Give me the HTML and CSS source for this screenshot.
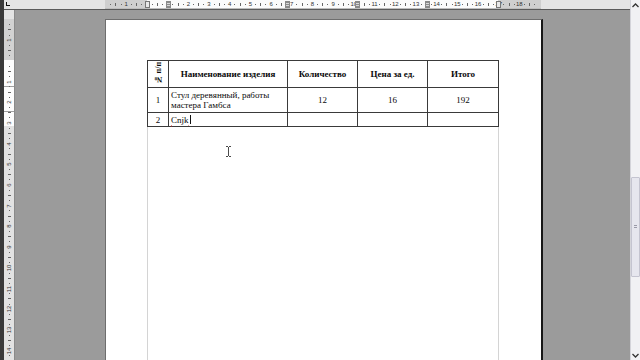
FILE: index.html
```html
<!DOCTYPE html>
<html lang="ru">
<head>
<meta charset="utf-8">
<title>Документ</title>
<link rel="stylesheet" href="styles.css">
</head>
<body>
<div class="app">
  <div class="edge"></div>
  <div class="main">
    <div class="topbar">
      <div class="tabsel"><span class="tabL"></span></div>
      <div class="hruler-wrap">
        <div class="hruler">
          <div class="hcell"><span></span><span class="dot"></span><span class="tick"></span><span class="dot"></span></div>
          <div class="hcell"><span>1</span><span class="dot"></span><span class="tick"></span><span class="dot"></span></div>
          <div class="hcell"><span></span><span class="dot"></span><span class="tick"></span><span class="dot"></span></div>
          <div class="hcell"><span></span><span class="dot"></span><span class="tick"></span><span class="dot"></span></div>
          <div class="hcell"><span>2</span><span class="dot"></span><span class="tick"></span><span class="dot"></span></div>
          <div class="hcell"><span>3</span><span class="dot"></span><span class="tick"></span><span class="dot"></span></div>
          <div class="hcell"><span>4</span><span class="dot"></span><span class="tick"></span><span class="dot"></span></div>
          <div class="hcell"><span>5</span><span class="dot"></span><span class="tick"></span><span class="dot"></span></div>
          <div class="hcell"><span>6</span><span class="dot"></span><span class="tick"></span><span class="dot"></span></div>
          <div class="hcell"><span>7</span><span class="dot"></span><span class="tick"></span><span class="dot"></span></div>
          <div class="hcell"><span>8</span><span class="dot"></span><span class="tick"></span><span class="dot"></span></div>
          <div class="hcell"><span>9</span><span class="dot"></span><span class="tick"></span><span class="dot"></span></div>
          <div class="hcell"><span>10</span><span class="dot"></span><span class="tick"></span><span class="dot"></span></div>
          <div class="hcell"><span>11</span><span class="dot"></span><span class="tick"></span><span class="dot"></span></div>
          <div class="hcell"><span>12</span><span class="dot"></span><span class="tick"></span><span class="dot"></span></div>
          <div class="hcell"><span>13</span><span class="dot"></span><span class="tick"></span><span class="dot"></span></div>
          <div class="hcell"><span>14</span><span class="dot"></span><span class="tick"></span><span class="dot"></span></div>
          <div class="hcell"><span>15</span><span class="dot"></span><span class="tick"></span><span class="dot"></span></div>
          <div class="hcell"><span>16</span><span class="dot"></span><span class="tick"></span><span class="dot"></span></div>
          <div class="hcell"><span>17</span><span class="dot"></span><span class="tick"></span><span class="dot"></span></div>
          <div class="hcell"><span>18</span><span class="dot"></span><span class="tick"></span><span class="dot"></span></div>
          <span class="mark indent-l"></span>
          <span class="mark col m1"></span>
          <span class="mark col m2"></span>
          <span class="mark col m3"></span>
          <span class="mark col m4"></span>
          <span class="mark indent-r"></span>
        </div>
      </div>
    </div>
    <div class="body">
      <div class="vruler">
        <div class="vcell"><span></span><span class="dot"></span><span class="tick"></span><span class="dot"></span></div>
        <div class="vcell"><span>1</span><span class="dot"></span><span class="tick"></span><span class="dot"></span></div>
        <div class="vcell"><span></span><span class="dot"></span><span class="tick"></span><span class="dot"></span></div>
        <div class="vcell"><span>1</span><span class="dot"></span><span class="tick"></span><span class="dot"></span></div>
        <div class="vcell"><span>2</span><span class="dot"></span><span class="tick"></span><span class="dot"></span></div>
        <div class="vcell"><span>3</span><span class="dot"></span><span class="tick"></span><span class="dot"></span></div>
        <div class="vcell"><span>4</span><span class="dot"></span><span class="tick"></span><span class="dot"></span></div>
        <div class="vcell"><span>5</span><span class="dot"></span><span class="tick"></span><span class="dot"></span></div>
        <div class="vcell"><span>6</span><span class="dot"></span><span class="tick"></span><span class="dot"></span></div>
        <div class="vcell"><span>7</span><span class="dot"></span><span class="tick"></span><span class="dot"></span></div>
        <div class="vcell"><span>8</span><span class="dot"></span><span class="tick"></span><span class="dot"></span></div>
        <div class="vcell"><span>9</span><span class="dot"></span><span class="tick"></span><span class="dot"></span></div>
        <div class="vcell"><span>10</span><span class="dot"></span><span class="tick"></span><span class="dot"></span></div>
        <div class="vcell"><span>11</span><span class="dot"></span><span class="tick"></span><span class="dot"></span></div>
        <div class="vcell"><span>12</span><span class="dot"></span><span class="tick"></span><span class="dot"></span></div>
        <div class="vcell"><span>13</span><span class="dot"></span><span class="tick"></span><span class="dot"></span></div>
        <div class="vcell"><span>14</span><span class="dot"></span><span class="tick"></span><span class="dot"></span></div>
      </div>
      <div class="workspace">
        <div class="page">
          <div class="textarea">
            <table class="grid">
              <colgroup><col class="c1"><col class="c2"><col class="c3"><col class="c4"><col class="c5"></colgroup>
              <tr class="r-head">
                <th class="num"><span class="vert">№ п/п</span></th>
                <th>Наименование изделия</th>
                <th>Количество</th>
                <th>Цена за ед.</th>
                <th>Итого</th>
              </tr>
              <tr class="r-1">
                <td class="ctr">1</td>
                <td class="name">Стул деревянный, работы мастера Гамбса</td>
                <td class="ctr">12</td>
                <td class="ctr">16</td>
                <td class="ctr">192</td>
              </tr>
              <tr class="r-2">
                <td class="ctr">2</td>
                <td class="name"><span class="typo">Cnjk</span><span class="caret"></span></td>
                <td></td>
                <td></td>
                <td></td>
              </tr>
            </table>
          </div>
          <svg class="ibeam" width="7" height="11" viewBox="0 0 7 11"><path d="M1 0.5h2M4 0.5h2M3.5 1v9M1 10.5h2M4 10.5h2" stroke="#4a4a4a" stroke-width="1" fill="none"/></svg>
        </div>
      </div>
    </div>
  </div>
  <div class="scrollbar">
    <div class="sb-btn"><svg width="7" height="5" viewBox="0 0 7 5"><path d="M0.5 4L3.5 1L6.5 4" stroke="#333" stroke-width="1.3" fill="none"/></svg></div>
    <div class="sb-track"><div class="sb-thumb"><span class="grip"></span></div></div>
    <div class="sb-btn"><svg width="7" height="5" viewBox="0 0 7 5"><path d="M0.5 1L3.5 4L6.5 1" stroke="#333" stroke-width="1.3" fill="none"/></svg></div>
  </div>
</div>
</body>
</html>
```

FILE: styles.css
```css
* { box-sizing: border-box; margin: 0; padding: 0; }
html, body { width: 640px; height: 360px; overflow: hidden; }
body { font-family: "Liberation Sans", Arial, sans-serif; background: #9b9b9b; }

.app { display: flex; width: 640px; height: 360px; }
.edge { width: 4px; flex: none; background: #3a3a3a; }
.main { width: 626px; flex: none; display: flex; flex-direction: column; }

/* top ruler */
.topbar { height: 10px; flex: none; display: flex; background: #e4e4e4; border-bottom: 1px solid #5a5a5a; }
.tabsel { width: 10px; flex: none; display: flex; padding: 2px 0 0 2px; }
.tabL { width: 4px; height: 4px; border-left: 1px solid #111; border-bottom: 1px solid #111; }
.hruler-wrap { flex: 1; padding-left: 91px; }
.hruler {
  position: relative; width: 436px; height: 9px; display: flex; padding-left: 0.6px;
  background: linear-gradient(to right, #cfcfcf 0 42px, #fbfbfb 42px 393px, #cfcfcf 393px);
  border-bottom: 1px solid #bdbdbd;
}
.hcell { width: 20.7px; height: 9px; flex: none; display: grid; grid-template-columns: repeat(4, 1fr); }
.hcell > span { width: 0; height: 9px; display: flex; justify-content: center; align-items: center;
  font-size: 6px; line-height: 9px; color: #333; white-space: nowrap; }
.hcell > .dot::before { content: ""; width: 1px; height: 1px; background: #666; flex: none; }
.hcell > .tick::before { content: ""; width: 1px; height: 3px; background: #666; flex: none; }

.mark { position: absolute; top: 1px; height: 7px; }
.mark.col { width: 5px; margin-left: -2px; background: repeating-linear-gradient(to bottom, #8c8c8c 0 1px, #d8d8d8 1px 2px); border: 1px solid #8a8a8a; }
.m1 { left: 63px; }
.m2 { left: 182px; }
.m3 { left: 252px; }
.m4 { left: 322px; }
.indent-l { left: 40px; width: 5px; border: 1px solid #777; background: #e8e8e8; }
.indent-r { left: 391px; width: 5px; border: 1px solid #777; background: #e8e8e8; }

/* body */
.body { flex: 1; min-height: 0; display: flex; }
.vruler {
  width: 11px; flex: none; display: flex; flex-direction: column; padding-top: 9.6px; overflow: hidden;
  border-right: 1px solid #8a8a8a;
  background: linear-gradient(to bottom, #e4e4e4 0 9px, #d2d2d2 9px 50px, #fdfdfd 50px 76px, #a0a0a0 76px 77px,
    #fdfdfd 77px 101px, #a0a0a0 101px 102px, #fdfdfd 102px 116px, #e2e2e2 116px);
}
.vcell { height: 20.7px; width: 10px; flex: none; display: grid; grid-template-rows: repeat(4, 1fr); }
.vcell > span { height: 0; width: 10px; display: flex; justify-content: center; align-items: center;
  font-size: 6px; color: #333; white-space: nowrap; }
.vcell > span:first-child { transform: rotate(-90deg); }
.vcell > .dot::before { content: ""; width: 1px; height: 1px; background: #666; flex: none; }
.vcell > .tick::before { content: ""; width: 3px; height: 1px; background: #666; flex: none; }

.workspace { flex: 1; overflow: hidden; padding: 9px 0 0 90px; background: #9b9b9b; }
.page {
  position: relative; width: 438px; height: 400px; background: #fff;
  border-left: 1px solid #6e6e6e; border-top: 1px solid #6e6e6e; border-right: 2px solid #161616;
  padding: 40px 0 0 41px;
}
.textarea {
  width: 352px; height: 320px;
  background:
    linear-gradient(#d4d4d4, #d4d4d4) left top / 1px 100% no-repeat,
    linear-gradient(#d4d4d4, #d4d4d4) 351px top / 1px 100% no-repeat;
}

/* table */
.grid { border-collapse: collapse; table-layout: fixed; width: 351px; background: #fff;
  font-family: "Liberation Serif", "Times New Roman", serif; font-size: 9px; line-height: 10px; color: #0a0a0a; }
.c1 { width: 21px; }
.c2 { width: 119px; }
.c3 { width: 70px; }
.c4 { width: 70px; }
.c5 { width: 71px; }
.grid th, .grid td { border: 1px solid #3a3a3a; padding: 0 2px; vertical-align: middle; }
.grid th { font-weight: bold; text-align: center; }
.r-head { height: 27px; }
.r-1 { height: 25px; }
.r-2 { height: 14px; }
.grid th.num { padding: 0; }
.vert { display: inline-block; writing-mode: vertical-rl; transform: rotate(180deg); font-size: 8px; line-height: 9px; white-space: nowrap; }
.ctr { text-align: center; }
.name { text-align: left; padding-left: 3px; }
.typo { text-decoration: underline wavy #d02020; text-decoration-thickness: 1px; text-underline-offset: 0; }
.caret { display: inline-block; width: 1px; height: 9px; background: #111; vertical-align: -1px; margin-left: 1px; }

.ibeam { position: absolute; left: 119px; top: 126px; }

/* scrollbar */
.scrollbar { width: 10px; flex: none; height: 360px; display: flex; flex-direction: column;
  background: #f1f1f4; border-left: 1px solid #d4d4da; }
.sb-btn { height: 10px; flex: none; display: flex; align-items: center; justify-content: center; }
.sb-track { flex: 1; padding-top: 167px; }
.sb-thumb { height: 100px; background: #e6e6ee; border: 1px solid #c4c4d0; border-radius: 1px;
  display: flex; align-items: center; justify-content: center; }
.grip { width: 3px; height: 4px; background: repeating-linear-gradient(to bottom, #9a9aa8 0 1px, transparent 1px 2px); }
```
